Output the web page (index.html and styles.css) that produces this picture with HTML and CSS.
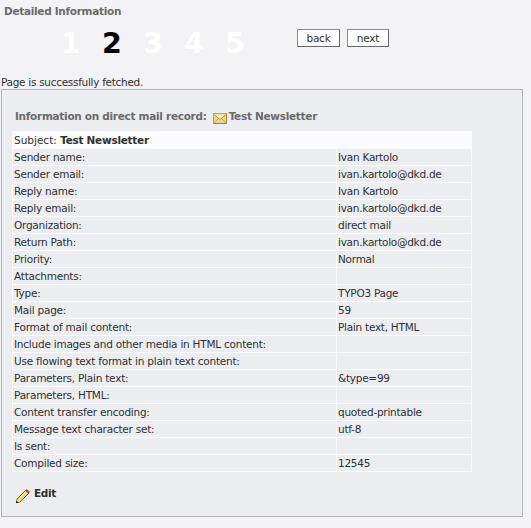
FILE: index.html
```html
<!DOCTYPE html>
<html lang="en">
<head>
<meta charset="utf-8">
<title>Detailed Information</title>
<link rel="stylesheet" href="styles.css">
</head>
<body>
<h1 class="title">Detailed Information</h1>
<div class="wizard">
  <ol class="steps"><li>1</li><li class="current">2</li><li>3</li><li>4</li><li>5</li></ol>
  <button class="btn back">back</button>
  <button class="btn next">next</button>
</div>
<p class="status">Page is successfully fetched.</p>
<main class="panel">
  <h2 class="heading"><span>Information on direct mail record:</span>
    <svg class="mail" width="14" height="11" viewBox="0 0 14 11"><rect x=".5" y=".5" width="13" height="10" fill="#ecd58c" stroke="#c9a456"/><path d="M1 10l4.500-4.500M13 10L8.500 5.500" fill="none" stroke="#c9a654"/><path d="M1 1.500l6 5 6-5" fill="#f7e9b4" stroke="#b99649"/><path d="M1 10.500h12.500V1" fill="none" stroke="#a98236"/></svg>
    <span>Test Newsletter</span></h2>
  <table class="record">
    <colgroup><col class="label-col"><col></colgroup>
    <tr class="subject"><td colspan="2">Subject: <b>Test Newsletter</b></td></tr>
    <tr><td>Sender name:</td><td>Ivan Kartolo</td></tr>
    <tr><td>Sender email:</td><td>ivan.kartolo@dkd.de</td></tr>
    <tr><td>Reply name:</td><td>Ivan Kartolo</td></tr>
    <tr><td>Reply email:</td><td>ivan.kartolo@dkd.de</td></tr>
    <tr><td>Organization:</td><td>direct mail</td></tr>
    <tr><td>Return Path:</td><td>ivan.kartolo@dkd.de</td></tr>
    <tr><td>Priority:</td><td>Normal</td></tr>
    <tr><td>Attachments:</td><td></td></tr>
    <tr><td>Type:</td><td>TYPO3 Page</td></tr>
    <tr><td>Mail page:</td><td>59</td></tr>
    <tr><td>Format of mail content:</td><td>Plain text, HTML</td></tr>
    <tr><td>Include images and other media in HTML content:</td><td></td></tr>
    <tr><td>Use flowing text format in plain text content:</td><td></td></tr>
    <tr><td>Parameters, Plain text:</td><td>&amp;type=99</td></tr>
    <tr><td>Parameters, HTML:</td><td></td></tr>
    <tr><td>Content transfer encoding:</td><td>quoted-printable</td></tr>
    <tr><td>Message text character set:</td><td>utf-8</td></tr>
    <tr><td>Is sent:</td><td></td></tr>
    <tr><td>Compiled size:</td><td>12545</td></tr>
  </table>
  <div class="edit">
    <svg width="14" height="14" viewBox="0 0 14 14"><path d="M1 10L10 1l3 3-9 9-3.500.5z" fill="#f2d45c" stroke="#6b5526"/><path d="M3 10l7-7" stroke="#fff2a0" stroke-width="1.500"/><path d="M9.500 1.500L11 .5 13.500 3l-1 1.500z" fill="#c94b36" stroke="#7c3024" stroke-width=".6"/><path d="M1 10l3 3-3.500.7z" fill="#f4e5cb"/><path d="M.3 11.500V14H3z" fill="#000"/></svg>
    <b>Edit</b>
  </div>
</main>
</body>
</html>
```
FILE: styles.css
```css
* { box-sizing: border-box; }
body {
  margin: 0;
  background: #f3f2f7;
  color: #303030;
  font: 10.5px/17px "DejaVu Sans", Verdana, sans-serif;
  letter-spacing: -.26px;
}
.title {
  margin: 0;
  padding: 3px 0 0 4px;
  font-size: 10.5px;
  line-height: 17px;
  letter-spacing: -.3px;
  color: #6b6b6b;
}
.wizard { display: flex; height: 54px; padding-top: 9px; }
.steps {
  display: flex;
  width: 297px;
  margin: 0;
  padding-left: 61px;
  list-style: none;
  font-size: 28.5px;
  font-weight: bold;
  line-height: 29px;
  color: #fff;
}
.steps li { width: 41px; }
.steps .current { color: #000; }
.btn {
  height: 18px;
  margin: 0 7px 0 0;
  padding: 1px 0 0;
  border: 1px solid;
  border-color: #8c8c96 #65656d #65656d #8c8c96;
  background: #fff;
  color: #303030;
  font: 10.5px/15px "DejaVu Sans", Verdana, sans-serif;
  letter-spacing: -.2px;
}
.back { width: 43px; }
.next { width: 42px; }
.status { margin: 0; padding-left: 1px; height: 15px; letter-spacing: -.29px; }
.panel {
  width: 522px;
  height: 428px;
  margin-left: 1px;
  padding: 18px 0 0 10px;
  border: 1px solid #b2b2b9;
  background: #ebedf0;
}
.heading {
  display: flex;
  height: 23px;
  margin: 0;
  padding-left: 3px;
  font-size: 10.5px;
  line-height: 17px;
  letter-spacing: -.29px;
  color: #6b6b6b;
}
.mail { margin: 5px 2px 0 6px; }
.record {
  width: 460px;
  table-layout: fixed;
  border-spacing: 0;
}
.label-col { width: 324px; }
.record td {
  height: 17px;
  padding: 0 0 0 1px;
  border-bottom: 1px solid #fbfbfd;
  border-left: 1px solid #fbfbfd;
  line-height: 16px;
}
.record td:first-child { letter-spacing: -.23px; }
.record td:last-child { border-right: 1px solid #fbfbfd; }
.record .subject td {
  height: 18px;
  background: #fbfbfd;
  letter-spacing: 0;
}
.subject b { letter-spacing: -.27px; }
.edit { display: flex; gap: 4px; padding: 13px 0 0 4px; }
.edit b { letter-spacing: -.35px; }
.edit svg { margin-top: 4px; }
```
